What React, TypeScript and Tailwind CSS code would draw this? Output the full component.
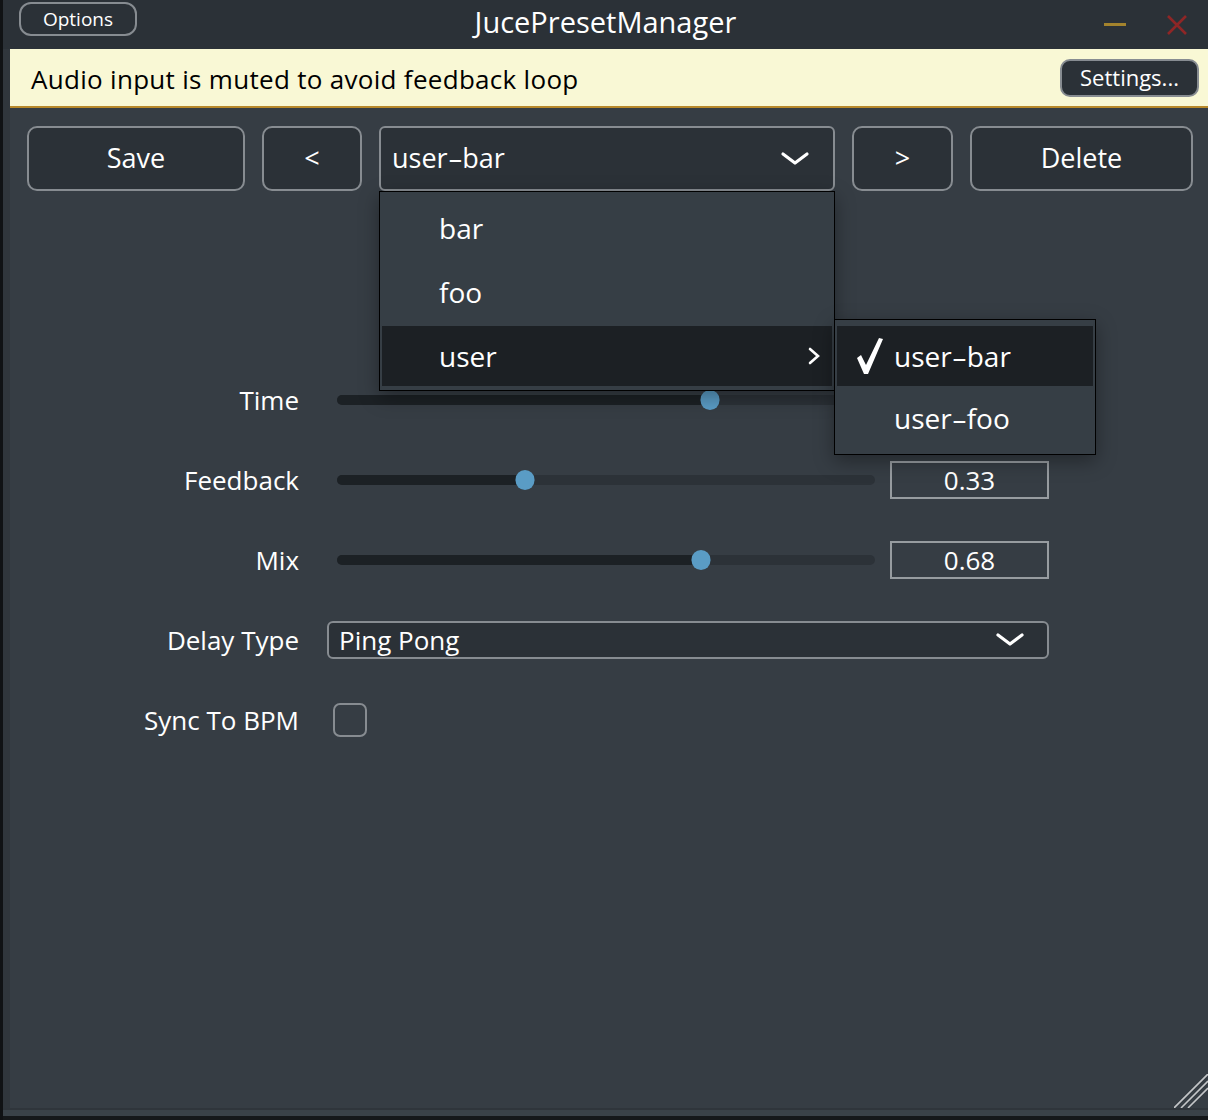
import React from "react";

const sliders = [
  { label: "Time", pos: 0.693, value: "" },
  { label: "Feedback", pos: 0.349, value: "0.33" },
  { label: "Mix", pos: 0.677, value: "0.68" },
];

function Chevron({ className }: { className?: string }) {
  return (
    <svg viewBox="0 0 30 16" className={className} fill="none">
      <path d="M3 3 L15 12 L27 3" stroke="currentColor" strokeWidth="3.2" strokeLinecap="round" strokeLinejoin="round" />
    </svg>
  );
}

// the hyphen in preset names is drawn wide in the original look and feel
function Name({ a, b }: { a: string; b: string }) {
  return (
    <span>
      {a}
      <span className="mx-[3px] inline-block scale-x-[1.7]">-</span>
      {b}
    </span>
  );
}

function PresetMenu() {
  return (
    <div className="absolute left-0 top-full z-20 w-[456px] border border-black bg-[#363e45] px-[2px] py-[4px] shadow-[0_6px_18px_rgba(0,0,0,0.35)]">
      <div className="flex h-[64px] items-center pl-[57px]">bar</div>
      <div className="flex h-[64px] items-center pl-[57px]">foo</div>
      <div className="mt-[2px] flex h-[60px] items-center justify-between bg-[#1c2024] pl-[57px] pr-[12px]">
        <span>user</span>
        <svg viewBox="0 0 12 18" className="h-[18px] w-[12px]" fill="none">
          <path d="M2 2 L10 9 L2 16" stroke="currentColor" strokeWidth="2.6" strokeLinecap="round" />
        </svg>
      </div>

      {/* submenu */}
      <div className="absolute left-[454px] top-[127px] w-[262px] border border-black bg-[#363e45] px-[2px] pt-[6px] pb-[4px] shadow-[0_6px_18px_rgba(0,0,0,0.35)]">
        <div className="flex h-[60px] items-center bg-[#1c2024] pl-[20px]">
          <svg viewBox="0 0 26 36" className="mr-[11px] h-[36px] w-[26px]">
            <path d="M0 20 L4 17 L9 27 L22 0 L26 1 L11 36 L7 36 Z" fill="white" />
          </svg>
          <Name a="user" b="bar" />
        </div>
        <div className="flex h-[64px] items-center pl-[57px]">
          <Name a="user" b="foo" />
        </div>
      </div>
    </div>
  );
}

export default function App() {
  return (
    <div
      className="flex h-[1120px] w-[1208px] overflow-hidden bg-[#121416] text-white"
      style={{ fontFamily: '"Open Sans", "Noto Sans", sans-serif' }}
    >
      <div className="w-[3px] shrink-0 bg-[#101214]" />
      <div className="flex flex-1 flex-col">
        {/* title bar */}
        <div className="grid h-[49px] shrink-0 grid-cols-[1fr_auto_1fr] items-center bg-[#2b3137]">
          <div className="flex items-start self-start pl-[16px] pt-[2px]">
            <button className="flex h-[34px] w-[118px] items-center justify-center rounded-[12px] border-2 border-[#878c91] text-[19px] font-medium">
              Options
            </button>
          </div>
          <div className="-mt-[6px] text-[29px] leading-none">JucePresetManager</div>
          <div className="flex items-center justify-end gap-[40px] pr-[20px]">
            <div className="h-[3px] w-[22px] bg-[#a3832d]" />
            <svg viewBox="0 0 22 22" className="h-[22px] w-[22px]" fill="none">
              <path d="M2 2 L20 20 M20 2 L2 20" stroke="#8e2626" strokeWidth="2.6" />
            </svg>
          </div>
        </div>

        <div className="flex flex-1">
          <div className="w-[7px] shrink-0 bg-[#30363c]" />
          <div className="relative flex flex-1 flex-col bg-[#363d44]">
            {/* notice banner */}
            <div className="flex h-[59px] shrink-0 items-center justify-between border-b-2 border-[#b8892a] bg-[#f9f8d5] pl-[21px] pr-[9px]">
              <span className="pt-[3px] text-[26px] tracking-[0.3px] text-black">Audio input is muted to avoid feedback loop</span>
              <button className="flex h-[38px] w-[139px] items-center justify-center rounded-[10px] border-2 border-[#878c91] bg-[#2b3137] text-[22px] font-medium text-white">
                Settings...
              </button>
            </div>

            {/* preset bar */}
            <div className="mt-[18px] flex h-[65px] gap-[17px] pl-[17px] text-[27px] font-medium">
              <button className="w-[218px] rounded-[10px] border-2 border-[#878c91] bg-[#2b3137]">Save</button>
              <button className="w-[100px] rounded-[10px] border-2 border-[#878c91] bg-[#2b3137]">&lt;</button>
              <div className="relative w-[456px]">
                <div className="flex h-full items-center justify-between rounded-[6px] border-2 border-[#878c91] bg-[#2b3137] pl-[11px] pr-[23px] font-normal">
                  <Name a="user" b="bar" />
                  <Chevron className="h-[16px] w-[30px] text-white" />
                </div>
                <div className="text-[28px] font-normal">
                  <PresetMenu />
                </div>
              </div>
              <button className="w-[101px] rounded-[10px] border-2 border-[#878c91] bg-[#2b3137]">&gt;</button>
              <button className="w-[223px] rounded-[10px] border-2 border-[#878c91] bg-[#2b3137]">Delete</button>
            </div>

            {/* parameters */}
            <div className="mt-[169px] flex flex-col text-[26px]">
              {sliders.map((s) => (
                <div key={s.label} className="flex h-[80px] items-center">
                  <div className="w-[289px] text-right">{s.label}</div>
                  <div className="relative ml-[38px] h-[10px] w-[538px] rounded-full bg-[#2c3238]">
                    <div className="h-full rounded-full bg-[#1c2125]" style={{ width: `${s.pos * 100}%` }} />
                    <div
                      className="absolute top-1/2 h-[20px] w-[19px] -translate-x-1/2 -translate-y-1/2 rounded-full bg-[#5a9cc5]"
                      style={{ left: `${s.pos * 100}%` }}
                    />
                  </div>
                  <div className="ml-[15px] flex h-[38px] w-[159px] items-center justify-center border-2 border-[#979ca0]">
                    {s.value}
                  </div>
                </div>
              ))}

              <div className="flex h-[80px] items-center">
                <div className="w-[289px] text-right">Delay Type</div>
                <div className="ml-[28px] flex h-[38px] w-[722px] items-center justify-between rounded-[6px] border-2 border-[#878c91] bg-[#2b3137] pl-[10px] pr-[22px]">
                  <span>Ping Pong</span>
                  <Chevron className="h-[16px] w-[30px] text-white" />
                </div>
              </div>

              <div className="flex h-[80px] items-center">
                <div className="w-[289px] text-right">Sync To BPM</div>
                <div className="ml-[34px] h-[34px] w-[34px] rounded-[7px] border-2 border-[#878c91]" />
              </div>
            </div>

            {/* resize grip */}
            <svg viewBox="0 0 34 34" className="absolute bottom-0 right-0 h-[34px] w-[34px]" fill="none">
              <path d="M0 34 L34 0 M7 34 L34 7 M14 34 L34 14" stroke="#c4c6c8" strokeWidth="1.6" />
            </svg>
          </div>
        </div>

        {/* bottom frame */}
        <div className="h-[2px] shrink-0 bg-[#2f353b]" />
        <div className="h-[6px] shrink-0 bg-[#3a4248]" />
        <div className="h-[4px] shrink-0 bg-[#15181a]" />
      </div>
    </div>
  );
}
